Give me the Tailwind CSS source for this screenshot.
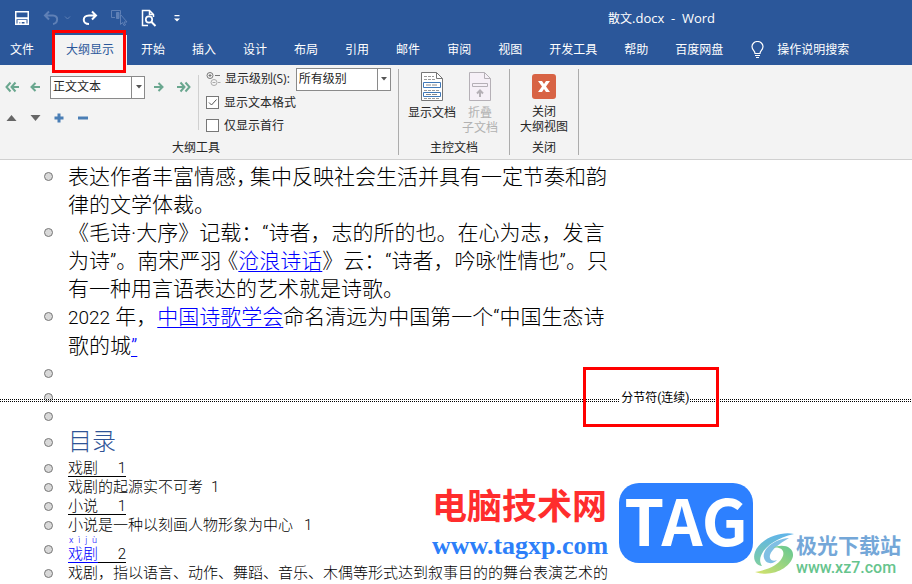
<!DOCTYPE html>
<html lang="zh-CN">
<head>
<meta charset="utf-8">
<meta name="viewport" content="width=device-width, initial-scale=1">
<title>散文.docx - Word</title>
<script src="https://cdn.jsdelivr.net/npm/@tailwindcss/browser@4"></script>
</head>
<body class="relative flex h-screen flex-col overflow-hidden bg-white font-['Open_Sans','Noto_Sans_CJK_SC',sans-serif] text-xs text-[#262626]">

<header class="shrink-0 bg-[#2b579a] text-white">
  <div class="flex h-[35px] items-center">
    <div class="flex w-[304px] items-center pl-[14px]">
      <button aria-label="保存" class="w-[29px]"><svg width="16" height="16" viewBox="0 0 16 16" fill="none" stroke="#fff" stroke-width="1.500"><path d="M1.750 1.750h12.500v12.500H1.750z"/><path d="M2 8.250h12" stroke-width="2"/><path d="M4.500 14v-3h7v3" stroke-width="2"/><path d="M7 12v2" stroke-width="1.500"/></svg></button>
      <button aria-label="撤消" class="w-[21px]"><svg width="17" height="16" viewBox="0 0 17 16" fill="none" stroke="#5f80b6" stroke-width="2"><path d="M6 1.500L2 5.500l4 4M2.500 5.500H10c6 0 5 8 0 8.500"/></svg></button>
      <button aria-label="撤消选项" class="w-[17px]"><svg width="7" height="16" viewBox="0 0 7 16" fill="none" stroke="#5f80b6"><path d="M1 6.500l2.500 2.500L6 6.500"/></svg></button>
      <button aria-label="恢复" class="w-[30px]"><svg width="17" height="16" viewBox="0 0 17 16" fill="none" stroke="#fff" stroke-width="2"><path d="M11 1.500l4 4-4 4M14.500 5.500H8c-7 0-7 8.500 0 8.500"/></svg></button>
      <button aria-label="触摸/鼠标模式" class="w-[30px]"><svg width="17" height="17" viewBox="0 0 17 17" fill="none" stroke="#5f80b6"><path d="M4 8.500H.5v-7h9V5"/><path d="M5.500 3.500h2.500v6H5.500z" fill="#5f80b6"/><path d="M9.500 5.500v10l2-2 1.500 3 1.500-.5-1.500-3H16z" fill="#2b579a"/></svg></button>
      <button aria-label="打印预览" class="w-8"><svg width="17" height="18" viewBox="0 0 17 18" fill="none" stroke="#fff"><path d="M7 16.500H1.500v-15h7l4 4V8M8.500 1.500v4h4" stroke-width="1.500"/><circle cx="8" cy="10.500" r="3.200" stroke-width="1.700"/><path d="M10.500 13l4 4" stroke-width="2"/></svg></button>
      <button aria-label="自定义快速访问工具栏"><svg width="8" height="10" viewBox="0 0 8 10" fill="#fff"><path d="M1.500 2h5v1.200h-5zM1 5.500h6L4 8.500z"/></svg></button>
    </div>
    <h1 class="flex-1 pt-0.5 pl-[304px] whitespace-pre">散文<span class="text-[13px]">.docx  -  Word</span></h1>
  </div>
  <nav class="flex h-[30px] items-center gap-[27px] pl-2.5 whitespace-nowrap" aria-label="功能区选项卡">
    <a href="#">文件</a>
    <a href="#" class="-mr-[13px] -ml-2 flex h-[30px] items-center bg-[#f3f3f3] px-[13px] text-[#2b579a]">大纲显示</a>
    <a href="#">开始</a>
    <a href="#">插入</a>
    <a href="#">设计</a>
    <a href="#">布局</a>
    <a href="#">引用</a>
    <a href="#">邮件</a>
    <a href="#">审阅</a>
    <a href="#">视图</a>
    <a href="#">开发工具</a>
    <a href="#">帮助</a>
    <a href="#">百度网盘</a>
    <a href="#" class="flex items-center gap-3"><svg width="15" height="18" viewBox="0 0 15 18" fill="none" stroke="#fff" stroke-width="1.200"><path d="M5 12.500c0-3-3-3.500-3-7a5.500 5 0 0 1 11 0c0 3.500-3 4-3 7zM5 14.500h5M6 16.500h3"/></svg>操作说明搜索</a>
  </nav>
</header>

<section class="flex h-[95px] shrink-0 border-b border-[#d0d0d0] bg-[#f3f3f3] pt-1 whitespace-nowrap" aria-label="大纲显示">
  <div class="flex w-[398px] flex-col">
    <div class="flex h-[70px] shrink-0">
      <div class="flex w-[198px] flex-col pt-1.5 pl-[5px]">
        <div class="flex h-6 items-center">
          <button aria-label="提升至标题 1" class="w-[25px]"><svg width="15" height="12" viewBox="0 0 15 12" fill="none" stroke="#6aa78f" stroke-width="2"><path d="M5.500 1.500L1.500 6l4 4.500M10.500 1.500L6.500 6l4 4.500M7 6h7"/></svg></button>
          <button aria-label="升级" class="w-5"><svg width="11" height="12" viewBox="0 0 11 12" fill="none" stroke="#6aa78f" stroke-width="2"><path d="M5.500 2L1.500 6l4 4M2 6h8"/></svg></button>
          <div class="relative mr-2 h-[23px] w-[95px]">
            <select aria-label="大纲级别" class="h-[23px] w-full appearance-none border border-[#8a8a8a] bg-white pl-0.5 text-[#262626]"><option>正文文本</option></select>
            <span class="pointer-events-none absolute inset-y-0 right-0 flex w-3.5 items-center justify-center border-l border-[#8a8a8a]"><svg width="6" height="4" viewBox="0 0 6 4" fill="#555"><path d="M0 0h6L3 3.500z"/></svg></span>
          </div>
          <button aria-label="降级" class="w-[23px]"><svg width="11" height="12" viewBox="0 0 11 12" fill="none" stroke="#6aa78f" stroke-width="2"><path d="M5.500 2l4 4-4 4M9 6H1"/></svg></button>
          <button aria-label="降级为正文"><svg width="15" height="12" viewBox="0 0 15 12" fill="none" stroke="#6aa78f" stroke-width="2"><path d="M4.500 1.500L8.500 6l-4 4.500M9.500 1.500L13.500 6l-4 4.500M8 6H1"/></svg></button>
        </div>
        <div class="mt-[7px] flex h-6 items-center gap-3">
          <button aria-label="上移" class="w-3"><svg class="mx-auto" width="11" height="8" viewBox="0 0 11 8" fill="#666"><path d="M.5 7L5.500 1l5 6z"/></svg></button>
          <button aria-label="下移" class="w-3"><svg class="mx-auto" width="11" height="8" viewBox="0 0 11 8" fill="#666"><path d="M.5 1l5 6 5-6z"/></svg></button>
          <button aria-label="展开" class="w-3"><svg class="mx-auto" width="10" height="10" viewBox="0 0 10 10" fill="none" stroke="#4a7eb5" stroke-width="3"><path d="M5 .5v9M.5 5h9"/></svg></button>
          <button aria-label="折叠" class="w-3"><svg class="mx-auto" width="10" height="10" viewBox="0 0 10 10" fill="none" stroke="#4a7eb5" stroke-width="3"><path d="M0 5h10"/></svg></button>
        </div>
      </div>
      <div class="mt-1.5 h-[55px] w-px bg-[#d0d0d0]"></div>
      <div class="flex flex-col pl-[7px]">
        <div class="-mt-0.5 flex h-6 items-center">
          <svg class="mr-1" width="15" height="16" viewBox="0 0 15 16" fill="none" stroke="#777"><circle cx="4" cy="4.500" r="3"/><path d="M2.500 4.500h3M4 3v3M9 4.500h5"/><g stroke="#aaa"><circle cx="8" cy="11.500" r="3"/><path d="M6.500 11.500h3M12 11.500h2.500"/></g></svg>
          <label for="level" class="mr-1.5">显示级别(S):</label>
          <div class="relative h-[23px] w-[95px]">
            <select id="level" class="h-[23px] w-full appearance-none border border-[#8a8a8a] bg-white pl-0.5 text-[#262626]"><option>所有级别</option></select>
            <span class="pointer-events-none absolute inset-y-0 right-0 flex w-3.5 items-center justify-center border-l border-[#8a8a8a]"><svg width="6" height="4" viewBox="0 0 6 4" fill="#555"><path d="M0 0h6L3 3.500z"/></svg></span>
          </div>
        </div>
        <label class="flex h-[23px] items-center gap-[5px]"><span class="relative flex"><input type="checkbox" checked class="size-[13px] appearance-none border border-[#777] bg-white"><svg class="pointer-events-none absolute inset-0" width="13" height="13" viewBox="0 0 13 13" fill="none" stroke="#555"><path d="M3 6.500L5.500 9l5-5.500"/></svg></span>显示文本格式</label>
        <label class="flex h-[23px] items-center gap-[5px]"><input type="checkbox" class="size-[13px] appearance-none border border-[#777] bg-white">仅显示首行</label>
      </div>
    </div>
    <h2 class="pr-1.5 text-center leading-[18px]">大纲工具</h2>
  </div>
  <div class="flex h-[86px] w-[112px] flex-col border-x border-[#acacac]">
    <div class="flex h-[70px] shrink-0 pt-[3px] pl-[9px]">
      <button class="flex w-12 flex-col items-center"><svg class="mb-1" width="22" height="29" viewBox="0 0 22 29" fill="none"><path d="M.5.5h15l6 6v22H.5z" fill="#fff" stroke="#777"/><path d="M15.500.5v6h6" stroke="#777"/><path d="M3 4.500h10M3 7.500h12M3 18.500h16M3 26.500h16" stroke="#999" stroke-dasharray="3 1"/><path d="M2.500 10.500h17v5h-17zM2.500 20.500h17v4h-17z" stroke="#3f78b8"/><path d="M5 13h12M5 22.500h12" stroke="#888" stroke-dasharray="5 1"/></svg>显示文档</button>
      <button disabled class="flex w-12 flex-col items-center leading-[15px] text-[#b1b1b1]"><svg class="mb-1" width="22" height="29" viewBox="0 0 22 29" fill="none" stroke="#b5b0b6"><path d="M.5.5h15l6 6v22H.5z" fill="#f6f0f7"/><path d="M15.500.5v6h6M3.500 11.500h15v3h-15z"/><path d="M11 25v-6M8 21.500l3-3 3 3" stroke-width="2"/></svg>折叠<br>子文档</button>
    </div>
    <h2 class="text-center leading-[18px]">主控文档</h2>
  </div>
  <div class="flex h-[86px] w-[69px] flex-col border-r border-[#acacac]">
    <button class="flex h-[70px] shrink-0 flex-col items-center pt-[5px] leading-[15px]"><svg class="mb-[5px]" width="24" height="25" viewBox="0 0 24 25"><rect width="24" height="25" rx="3" fill="#d86344"/><path d="M6 7h4l2 3 2-3h4l-4 5.500 4 5.500h-4l-2-3-2 3H6l4-5.500z" fill="#fff"/></svg>关闭<br>大纲视图</button>
    <h2 class="text-center leading-[18px]">关闭</h2>
  </div>
</section>

<main class="flex-1 overflow-hidden pt-[3px] font-['Roboto','Noto_Sans_CJK_SC',sans-serif] font-light whitespace-nowrap text-black">
  <ul class="text-[15px] leading-[19px] [&>li]:flex [&>li]:gap-[15px] [&>li]:pl-11 [&_p>a]:text-[#0000ff] [&_p>a]:underline [&_p>a]:decoration-1 [&_p>a]:underline-offset-3">
    <li class="text-[21px] leading-7"><i class="mt-[9px] size-[9px] shrink-0 rounded-full border border-[#777] bg-[#d9d9d9]"></i><p>表达作者丰富情感<span class="inline-block w-3.5 [font-feature-settings:'halt']">，</span>集中反映社会生活并具有一定节奏和韵<br>律的文学体裁。</p></li>
    <li class="text-[21px] leading-7"><i class="mt-[9px] size-[9px] shrink-0 rounded-full border border-[#777] bg-[#d9d9d9]"></i><p>《毛诗·大序》记载：“诗者，志的所的也。在心为志，发言<br>为诗”。南宋严羽<span class="inline-block w-[17px] text-right [font-feature-settings:'halt']">《</span><a href="#">沧浪诗话</a>》云：“诗者，吟咏性情也”。只<br>有一种用言语表达的艺术就是诗歌。</p></li>
    <li class="text-[21px] leading-7"><i class="mt-[9px] size-[9px] shrink-0 rounded-full border border-[#777] bg-[#d9d9d9]"></i><p><span class="text-[19px]">2022</span> 年，<a href="#">中国诗歌学会</a>命名清远为中国第一个“中国生态诗<br>歌的城<a href="#">”</a></p></li>
    <li class="h-7"><i class="mt-[9px] size-[9px] shrink-0 rounded-full border border-[#777] bg-[#d9d9d9]"></i></li>
    <li class="relative h-[18px]"><i class="mt-[5px] size-[9px] shrink-0 rounded-full border border-[#777] bg-[#d9d9d9]"></i>
      <div class="absolute inset-x-0 top-[3px] flex h-[18px] items-center text-xs">
        <span class="flex w-[68%] flex-col gap-px"><span class="h-px bg-[repeating-linear-gradient(90deg,#000_0px,#000_1px,#fff_1px,#fff_2px)]"></span><span class="h-px bg-[repeating-linear-gradient(90deg,#000_0px,#000_1px,#fff_1px,#fff_2px)]"></span></span>
        <span class="px-px pb-1 font-normal">分节符(连续)</span>
        <span class="flex flex-1 flex-col gap-px"><span class="h-px bg-[repeating-linear-gradient(90deg,#000_0px,#000_1px,#fff_1px,#fff_2px)]"></span><span class="h-px bg-[repeating-linear-gradient(90deg,#000_0px,#000_1px,#fff_1px,#fff_2px)]"></span></span>
      </div>
    </li>
    <li class="h-5"><i class="mt-1.5 size-[9px] shrink-0 rounded-full border border-[#777] bg-[#d9d9d9]"></i></li>
    <li class="h-[33px] text-2xl text-[#2f5496]"><i class="mt-3 size-[9px] shrink-0 rounded-full border border-[#777] bg-[#d9d9d9]"></i><h2>目录</h2></li>
    <li class="h-[19px]"><i class="mt-[5px] size-[9px] shrink-0 rounded-full border border-[#777] bg-[#d9d9d9]"></i><a href="#" class="flex h-[18px] w-[58px] justify-between border-b border-black"><span>戏剧</span><span>1</span></a></li>
    <li class="h-[19px]"><i class="mt-[5px] size-[9px] shrink-0 rounded-full border border-[#777] bg-[#d9d9d9]"></i><a href="#" class="flex gap-2"><span>戏剧的起源实不可考</span><span>1</span></a></li>
    <li class="h-[19px]"><i class="mt-[5px] size-[9px] shrink-0 rounded-full border border-[#777] bg-[#d9d9d9]"></i><a href="#" class="flex h-[18px] w-[58px] justify-between border-b border-black"><span>小说</span><span>1</span></a></li>
    <li class="h-[19px]"><i class="mt-[5px] size-[9px] shrink-0 rounded-full border border-[#777] bg-[#d9d9d9]"></i><a href="#" class="flex gap-[11px]"><span>小说是一种以刻画人物形象为中心</span><span>1</span></a></li>
    <li class="h-[29px]"><i class="mt-2.5 size-[9px] shrink-0 rounded-full border border-[#777] bg-[#d9d9d9]"></i><a href="#" class="flex h-7 w-[58px] items-end justify-between"><span class="flex flex-col text-[#0000ff]"><span class="flex justify-between px-px text-[9px] leading-[9px]"><span>x</span><span>ì</span><span>j</span><span>ù</span></span><span class="h-[18px] border-b border-[#0000ff]">戏剧</span></span><span class="h-[18px] flex-1 border-b border-black text-right">2</span></a></li>
    <li class="h-[19px]"><i class="mt-[5px] size-[9px] shrink-0 rounded-full border border-[#777] bg-[#d9d9d9]"></i><p>戏剧，指以语言、动作、舞蹈、音乐、木偶等形式达到叙事目的的舞台表演艺术的</p></li>
  </ul>
</main>

<!-- Annotation frames -->
<div class="pointer-events-none absolute top-[30px] left-[52px] h-[43px] w-[74px] border-3 border-[#ff0000]"></div>
<div class="pointer-events-none absolute top-[367px] left-[583px] h-[60px] w-[136px] border-3 border-[#ff0000]"></div>

<!-- Site marks over the page -->
<div class="absolute top-[483px] left-[432px] flex gap-2.5 whitespace-nowrap">
  <div class="w-[177px]">
    <p class="text-[35px] leading-[45px] font-bold text-[#ff2d2d]">电脑技术网</p>
    <p class="font-['Liberation_Serif',serif] text-[26px] leading-[35px] font-bold text-[#2d7ff9]">www.tagxp.com</p>
  </div>
  <div class="flex h-20 w-[134px] items-center justify-center rounded-[20px] bg-[#2d80ff] pb-2.5 font-['Noto_Sans_CJK_SC',sans-serif] text-[64px] leading-none font-bold text-white">TAG</div>
</div>
<div class="absolute top-[532px] left-[752px] flex gap-0.5 whitespace-nowrap">
  <svg width="42" height="44" viewBox="0 0 42 44"><defs><linearGradient id="a" x1="0" x2="0" y1="0" y2="1"><stop stop-color="#60b4ea"/><stop offset="1" stop-color="#7fcf9f"/></linearGradient><linearGradient id="b" x1="0" x2="1" y1="1" y2="0"><stop stop-color="#d8e36a"/><stop offset="1" stop-color="#62c795"/></linearGradient></defs><path d="M42 2C28-1 8 7 3 20c-3 8 2 14 7 14C3 24 16 8 42 2z" fill="url(#a)"/><path d="M37 6C22 7 10 17 12 26c2 7 10 6 13 2-5 2-8-1-7-5 2-6 9-11 19-17z" fill="#80bfe4"/><path d="M20 16c9-2 14 3 10 10C26 34 14 38 3 40c18 6 36-5 38-16 1-9-10-13-21-8z" fill="url(#b)"/></svg>
  <div>
    <p class="text-[21px] leading-[27px] font-bold text-[#74a7d8]">极光下载站</p>
    <p class="font-['Roboto',sans-serif] text-base leading-[18px] font-medium text-[#66c48d]">www.xz7.com</p>
  </div>
</div>
</body>
</html>
